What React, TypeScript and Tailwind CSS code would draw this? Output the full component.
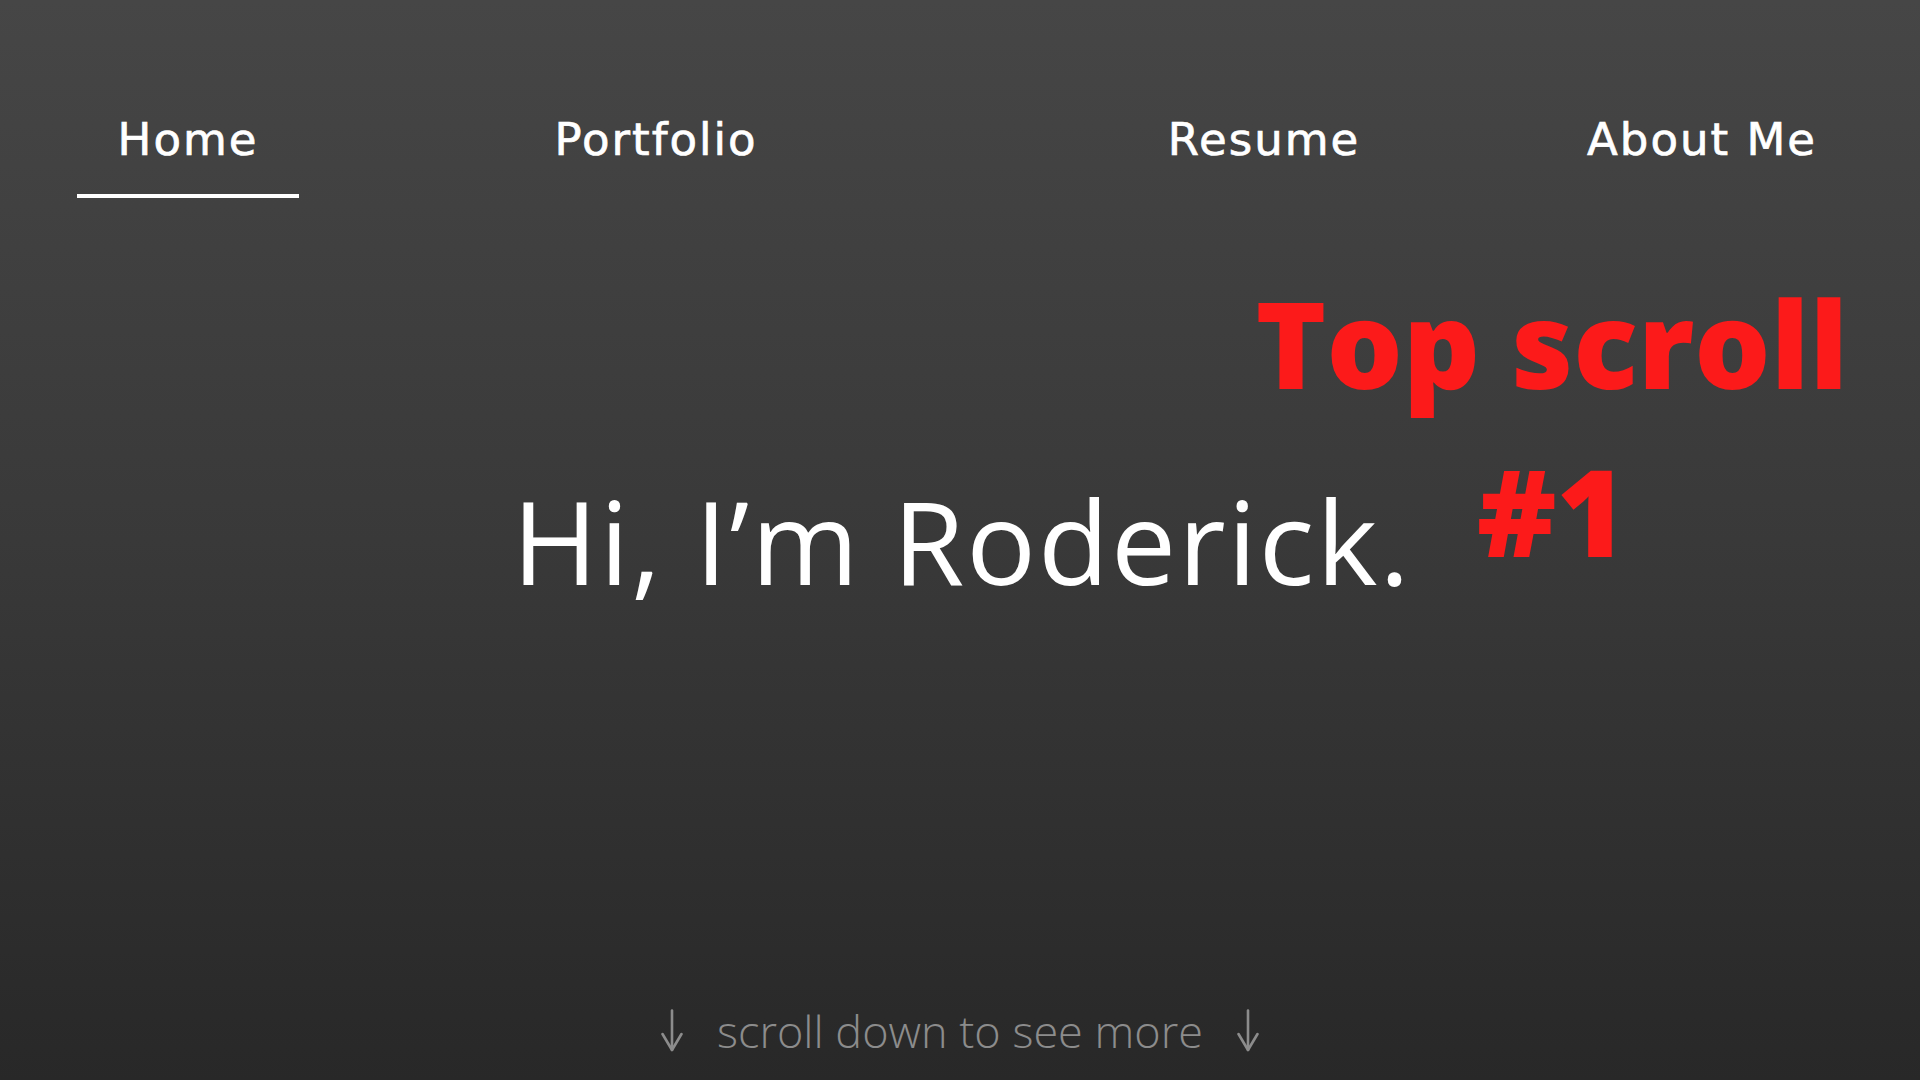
const NAV_ITEMS = [
  { label: "Home", active: true, offset: "ml-0" },
  { label: "Portfolio", active: false, offset: "ml-[246px]" },
  { label: "Resume", active: false, offset: "ml-[386px]" },
  { label: "About Me", active: false, offset: "ml-[216px]" },
];

function DownArrow() {
  return (
    <svg
      width="22"
      height="43"
      viewBox="0 0 22 43"
      fill="none"
      stroke="#8c8c8c"
      strokeWidth="2.6"
      strokeLinecap="round"
      strokeLinejoin="round"
      aria-hidden
    >
      <path d="M11 1.5V41" />
      <path d="M1.5 25l9.5 16 9.5-16" />
    </svg>
  );
}

export default function App() {
  return (
    <div className="relative flex h-[1080px] w-full flex-col overflow-hidden bg-gradient-to-b from-[#464646] via-[#393939] to-[#282828]">
      {/* Nav */}
      <nav className="flex pl-[77px] pt-[117px]">
        {NAV_ITEMS.map((item) => (
          <div
            key={item.label}
            className={`flex w-[222px] shrink-0 flex-col items-center ${item.offset}`}
          >
            <span className="whitespace-nowrap font-['DejaVu_Sans',sans-serif] text-[45px] leading-none tracking-[2px] text-white [-webkit-text-stroke:0.7px_white]">
              {item.label}
            </span>
            <span
              className={`mt-[32px] h-[4px] w-full ${
                item.active ? "bg-white" : "bg-transparent"
              }`}
            />
          </div>
        ))}
      </nav>

      {/* Hero */}
      <h1 className="mt-[284px] pl-[4px] text-center font-['Open_Sans',sans-serif] text-[116px] font-normal leading-none tracking-[2px] text-white">
        Hi, I’m Roderick.
      </h1>

      {/* Scroll hint */}
      <div className="mt-[410px] flex items-center justify-center gap-[34px]">
        <DownArrow />
        <span className="whitespace-nowrap font-['Open_Sans',sans-serif] text-[45px] font-light leading-none text-[#8c8c8c]">
          scroll down to see more
        </span>
        <DownArrow />
      </div>

      {/* Annotation overlay */}
      <div className="absolute left-[1252px] top-[259px] w-[600px] text-center font-['Open_Sans',sans-serif] text-[120px] font-extrabold leading-[168px] text-[#fc1a1a]">
        <p>Top scroll</p>
        <p>#1</p>
      </div>
    </div>
  );
}
